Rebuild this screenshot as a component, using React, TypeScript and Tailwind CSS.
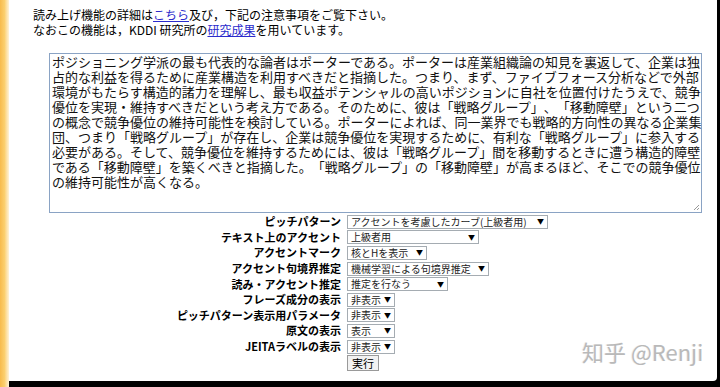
const FONT = { fontFamily: '"MS PGothic", "Noto Sans CJK JP", sans-serif' };

const LINES = [
  'ポジショニング学派の最も代表的な論者はポーターである。ポーターは産業組織論の知見を裏返して、企業は独',
  '占的な利益を得るために産業構造を利用すべきだと指摘した。つまり、まず、ファイブフォース分析などで外部',
  '環境がもたらす構造的諸力を理解し、最も収益ポテンシャルの高いポジションに自社を位置付けたうえで、競争',
  '優位を実現・維持すべきだという考え方である。そのために、彼は「戦略グループ」、「移動障壁」という二つ',
  'の概念で競争優位の維持可能性を検討している。ポーターによれば、同一業界でも戦略的方向性の異なる企業集',
  '団、つまり「戦略グループ」が存在し、企業は競争優位を実現するために、有利な「戦略グループ」に参入する',
  '必要がある。そして、競争優位を維持するためには、彼は「戦略グループ」間を移動するときに遭う構造的障壁',
  'である「移動障壁」を築くべきと指摘した。「戦略グループ」の「移動障壁」が高まるほど、そこでの競争優位',
  'の維持可能性が高くなる。',
];

const ROWS: { label: string; value: string; width: string }[] = [
  { label: 'ピッチパターン', value: 'アクセントを考慮したカーブ(上級者用)', width: 'w-[201px]' },
  { label: 'テキスト上のアクセント', value: '上級者用', width: 'w-[132px]' },
  { label: 'アクセントマーク', value: '核とHを表示', width: 'w-[80px]' },
  { label: 'アクセント句境界推定', value: '機械学習による句境界推定', width: 'w-[142px]' },
  { label: '読み・アクセント推定', value: '推定を行なう', width: 'w-[101px]' },
  { label: 'フレーズ成分の表示', value: '非表示', width: 'w-[48px]' },
  { label: 'ピッチパターン表示用パラメータ', value: '非表示', width: 'w-[48px]' },
  { label: '原文の表示', value: '表示', width: 'w-[48px]' },
  { label: 'JEITAラベルの表示', value: '非表示', width: 'w-[48px]' },
];

function FakeSelect({ value, width }: { value: string; width: string }) {
  return (
    <div
      className={`${width} h-[14px] flex items-center justify-between border border-[#a5acb2] bg-white pl-[3px] pr-[3px] text-[10px] leading-none text-[#222]`}
    >
      <span className="whitespace-nowrap">{value}</span>
      <span className="text-[7px] text-black">▼</span>
    </div>
  );
}

export default function App() {
  return (
    <div className="w-[720px] h-[387px] flex bg-black overflow-hidden [text-spacing-trim:space-all]" style={FONT}>
      <div className="w-[9px] h-full bg-gradient-to-r from-[#f7bb4c] via-[#fbcf6e] to-[#fff3d8]" />
      <div className="flex-1 flex flex-col">
        <div className="relative flex-1 bg-white mr-[3px] rounded-br-[4px] text-black">
          <div className="pl-[24px] pt-[7px] text-[12px] leading-[15px]">
            <div>
              読み上げ機能の詳細は<span className="text-[#2b2bcc] underline">こちら</span>及び，下記の注意事項をご覧下さい。
            </div>
            <div>
              なおこの機能は，KDDI 研究所の<span className="text-[#2b2bcc] underline">研究成果</span>を用いています。
            </div>
          </div>

          <div className="relative ml-[40px] mt-[16px] w-[653px] h-[160px] border border-[#8aa3c4] pl-[2px] text-[13px] leading-[15px] text-[#111]">
            {LINES.map((l, i) => (
              <div key={i} className="whitespace-nowrap">
                {l}
              </div>
            ))}
            <svg className="absolute right-[1px] bottom-[1px]" width="8" height="8" viewBox="0 0 8 8">
              <path d="M7 2 L2 7 M7 5 L5 7" stroke="#999" strokeWidth="1" />
            </svg>
          </div>

          <div className="mt-[1px] flex flex-col">
            {ROWS.map((r) => (
              <div key={r.label} className="h-[15.6px] flex items-center">
                <div className="w-[332px] text-right text-[11px] font-bold leading-none whitespace-nowrap">
                  {r.label}
                </div>
                <div className="ml-[6px]">
                  <FakeSelect value={r.value} width={r.width} />
                </div>
              </div>
            ))}
            <div className="ml-[338px] mt-[1px]">
              <div className="w-[32px] h-[16px] flex items-center justify-center border border-[#9a9a9a] bg-[#f2f2f2] text-[11px] leading-none">
                実行
              </div>
            </div>
          </div>

          <div
            className="absolute left-[573px] top-[340px] text-[22px] leading-none text-[#b9b9b9]"
            style={{ textShadow: '1px 1px 0 #fff, -1px 0 0 #eee' }}
          >
            知乎 @Renji
          </div>
        </div>
        <div className="h-[6px]" />
      </div>
    </div>
  );
}
